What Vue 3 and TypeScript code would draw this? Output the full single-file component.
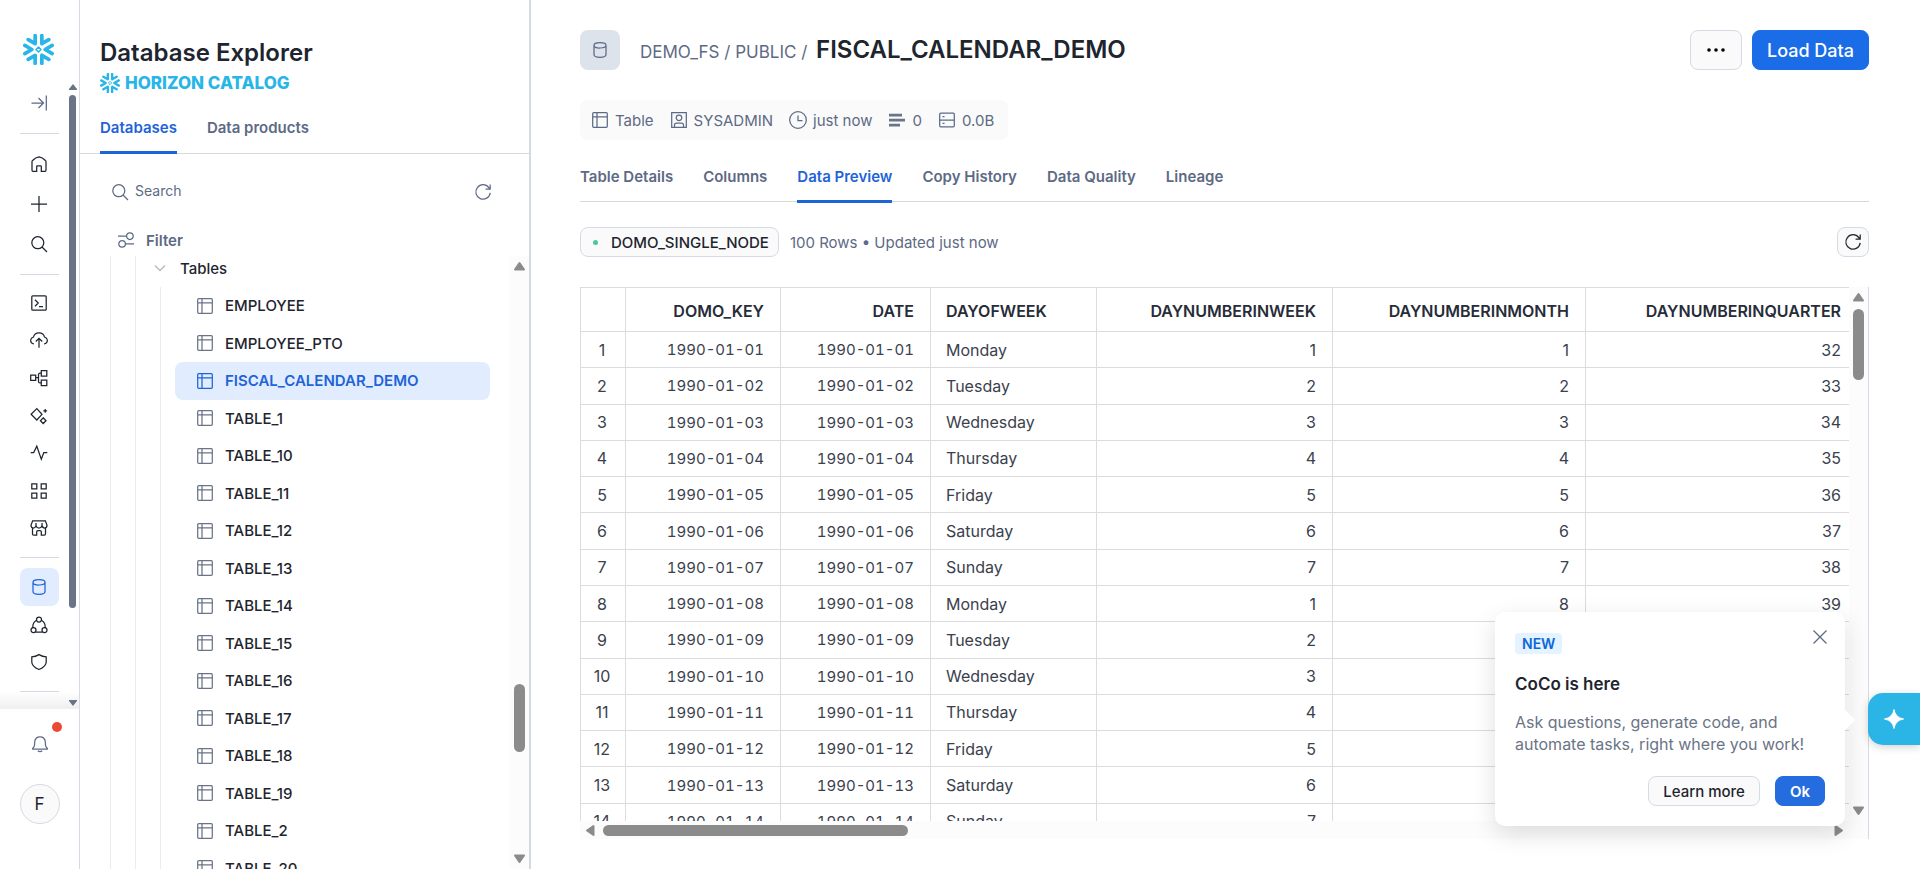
<script setup lang="ts">
import { h, ref } from 'vue'

const paths: Record<string, string> = {
  collapse: 'M.5 8H12M7.5 3l5 5-5 5M15.3.5v15',
  home: 'M5.7 15.3H2q-1 0-1-1V5.6q0-.7.6-1.1Q4.600 1.200 8 .8q3.400.400 6.400 3.700.600.400.600 1.100v8.700q0 1-1 1h-3.700V10.500q0-.7-.7-.7H6.400q-.7 0-.7.700z',
  plus: 'M0 8h16M8 0v16',
  search: 'M12.800 6.700A6 6 0 1 1 .8 6.700a6 6 0 0 1 12 0zM11 11l5 5',
  terminal: 'M1.800.800h12.400q1 0 1 1v12.400q0 1-1 1H1.800q-1 0-1-1V1.800q0-1 1-1zM4 4.800l3.200 3.200L4 11.200M8 11.700h4',
  cloud: 'M3 12C1 11.600-.500 10 -.3 8c.2-1.500 1.300-2.600 2.800-3C3 2.500 5.200.8 8 .8s5 1.700 5.500 4.200c1.500.4 2.600 1.500 2.800 3 .2 2-1.300 3.600-3.300 4M8 15.800V6.500M4.800 9.500 8 6.300l3.200 3.200',
  flow: 'M-.3 5h5v5.400h-5zM10.300.500h5.500V6h-5.500zM10.300 10.200h5.500v5.300h-5.500zM4.700 7.700h2.800M10.300 3.200H9q-1.500 0-1.500 1.500V11.400q0 1.500 1.500 1.500h1.300',
  sparkles: 'M5.800.600 11 6.300 5.800 12 .1 6.300zM12.200 9.800 15 12.700 12.200 15.500 9.400 12.700zM14.200.9v3.800M12.300 2.800h3.800',
  activity: 'M-.3 7.500h3L5.800 1.200 10.300 14.200 12.800 7.500h3.500',
  grid: 'M.8.800h5v5h-5zM10.200.800h5v5h-5zM.8 10.200h5v5h-5zM10.200 10.200h5v5h-5z',
  store: 'M1.600.800h12.800L16 5.300q0 2.700-2.200 2.700T11 5.500Q10.500 8 8 8T5 5.500Q4.500 8 2.300 8T0 5.300zM5 3v2.500M11 3v2.500M1.500 8v6q0 1.200 1.200 1.200h3V11.800q0-1.300 1.300-1.300h2q1.300 0 1.300 1.300v3.400h3q1.200 0 1.200-1.200V8',
  database: 'M2 3.300Q2 .7 8 .7t6 2.600-6 2.700-6-2.700zM2 3.300v9.200Q2 15.300 8 15.300t6-2.800V3.300',
  share: 'M10.500 2.500a2.500 2.500 0 1 1-5 0 2.500 2.500 0 0 1 5 0zM5 13a2.500 2.500 0 1 1-5 0 2.500 2.500 0 0 1 5 0zM16 13a2.500 2.500 0 1 1-5 0 2.500 2.500 0 0 1 5 0zM5.500 3.200Q1.500 5.500 1.800 10.500M10.500 3.200q4 2.300 3.700 7.300M4.800 15h6.400',
  shield: 'M8 .6q3.500 2.200 7.200 2.200V8q0 4.500-7.200 7.500Q.8 12.500.8 8V2.800Q4.500 2.800 8 .600z',
  bell: 'M.7 12.200q2-1 2-6Q3 .8 8 .8t5.300 5.400q0 5 2 6v1H.7zM5.800 14.700Q8 16.500 10.200 14.700',
  table: 'M1.700.700h12.600q1 0 1 1v12.600q0 1-1 1H1.700q-1 0-1-1V1.700q0-1 1-1zM.7 4.800h14.600M5 .700v14.600',
  chevron: 'M3 5.500 8 10.500 13 5.500',
  filter: 'M0 4.200h8M15.200 4.200a3.300 3.300 0 1 1-6.600 0 3.300 3.300 0 0 1 6.600 0zM7.400 11.800a3.300 3.300 0 1 1-6.600 0 3.300 3.300 0 0 1 6.600 0zM7.500 11.800H16',
  refresh: 'M15.200 8.800A7.200 7.200 0 1 1 13.800 3.600L15.200 5M15.200.6V5.200H10.600',
  person: 'M.7.7h14.600v14.600H.7zM10.800 5.800a2.800 2.800 0 1 1-5.600 0 2.800 2.800 0 0 1 5.600 0zM3.500 15v-2q0-2 2-2h5q2 0 2 2v2',
  clock: 'M16.300 8A8.300 8.300 0 1 1-.3 8a8.300 8.300 0 0 1 16.600 0zM8 3.500V8.500h4.500',
  server: 'M1.700 1.200h12.600q1 0 1 1v11.600q0 1-1 1H1.700q-1 0-1-1V2.200q0-1 1-1zM.7 8h14.600M3.500 4.600h2M3.500 11.400h2',
  close: 'M1.500 1.500l13 13M14.500 1.500l-13 13',
}

const Icon = (props: { name: string }) =>
  h(
    'svg',
    { width: 16, height: 16, viewBox: '0 0 16 16', fill: 'none', stroke: 'currentColor', 'stroke-width': 1.25, overflow: 'visible', 'aria-hidden': 'true' },
    [h('path', { d: paths[props.name] })],
  )
Icon.props = ['name']

const arrows: Record<string, string> = {
  up: 'M6.500 3 11 9.500H2z',
  down: 'M6.500 10 2 3.500h9z',
  left: 'M3 6.500 9.500 2v9z',
  right: 'M10 6.500 3.500 2v9z',
}
const Arrow = (props: { dir: string }) =>
  h(
    'svg',
    { width: 13, height: 13, viewBox: '0 0 13 13', fill: '#8b8b8b', stroke: '#8b8b8b', 'stroke-width': 2, 'stroke-linejoin': 'round', 'aria-hidden': 'true' },
    [h('path', { d: arrows[props.dir] })],
  )
Arrow.props = ['dir']

const Snowflake = (props: { size: number }) =>
  h('svg', { width: props.size, height: props.size, viewBox: '-15 -15 30 30', fill: 'none', stroke: '#29b5e8', 'aria-hidden': 'true' }, [
    ...[0, 60, 120, 180, 240, 300].map((angle) =>
      h('path', { d: 'M13.200-3.900 6.500 0l6.700 3.900', transform: `rotate(${angle})`, 'stroke-width': 3.6, 'stroke-linecap': 'round', 'stroke-linejoin': 'round' }),
    ),
    h('path', { d: 'M0-2.400 2.400 0 0 2.400-2.400 0z', 'stroke-width': 1.5, 'stroke-linejoin': 'round' }),
  ])
Snowflake.props = ['size']

const topNav = [['home', 'Home'], ['plus', 'Create'], ['search', 'Search']]
const midNav = [
  ['terminal', 'Projects'], ['cloud', 'Ingestion'], ['flow', 'Transformation'], ['sparkles', 'AI & ML'],
  ['activity', 'Monitoring'], ['grid', 'Apps'], ['store', 'Marketplace'],
]
const lowNav = [['database', 'Catalog'], ['share', 'Data sharing'], ['shield', 'Governance']]

const tables = [
  'EMPLOYEE', 'EMPLOYEE_PTO', 'FISCAL_CALENDAR_DEMO', 'TABLE_1', 'TABLE_10', 'TABLE_11', 'TABLE_12', 'TABLE_13',
  'TABLE_14', 'TABLE_15', 'TABLE_16', 'TABLE_17', 'TABLE_18', 'TABLE_19', 'TABLE_2', 'TABLE_20',
]
const selected = ref('FISCAL_CALENDAR_DEMO')

const tabs = ['Table Details', 'Columns', 'Data Preview', 'Copy History', 'Data Quality', 'Lineage']
const activeTab = ref('Data Preview')

const weekdays = ['Monday', 'Tuesday', 'Wednesday', 'Thursday', 'Friday', 'Saturday', 'Sunday']
const rows = Array.from({ length: 14 }, (_, i) => {
  const date = `1990-01-${String(i + 1).padStart(2, '0')}`
  return { n: i + 1, date, day: weekdays[i % 7], week: (i % 7) + 1, month: i + 1, quarter: 32 + i }
})

const query = ref('')
const showTip = ref(true)
</script>

<template>
  <div class="app">
    <nav class="rail" aria-label="Main">
      <a class="logo" href="#" aria-label="Home page"><Snowflake :size="31" /></a>
      <div class="rail-scroll">
        <div class="rail-items">
          <button class="rail-btn muted expand" aria-label="Expand menu"><Icon name="collapse" /></button>
          <hr />
          <div class="group top">
            <button v-for="[icon, label] in topNav" :key="icon" class="rail-btn" :aria-label="label"><Icon :name="icon" /></button>
          </div>
          <hr />
          <div class="group mid">
            <button v-for="[icon, label] in midNav" :key="icon" class="rail-btn" :aria-label="label"><Icon :name="icon" /></button>
          </div>
          <hr />
          <div class="group low">
            <button v-for="[icon, label] in lowNav" :key="icon" class="rail-btn" :class="{ active: icon === 'database' }" :aria-label="label">
              <Icon :name="icon" />
            </button>
          </div>
          <hr />
        </div>
        <div class="rail-bar">
          <svg width="8" height="6" viewBox="0 0 8 6"><path d="M4 0 8 5v1H0V5z" /></svg>
          <div class="rail-thumb"></div>
          <svg width="8" height="6" viewBox="0 0 8 6"><path d="M4 6 8 1V0H0v1z" /></svg>
        </div>
      </div>
      <div class="rail-foot">
        <button class="bell" aria-label="Notifications"><Icon name="bell" /><span class="dot"></span></button>
        <button class="avatar" aria-label="Account">F</button>
      </div>
    </nav>

    <aside class="explorer">
      <header class="ex-head">
        <h1>Database Explorer</h1>
        <div class="brand"><Snowflake :size="20" /><span>HORIZON CATALOG</span></div>
        <div class="tabs ex-tabs" role="tablist">
          <button role="tab" class="tab on">Databases</button>
          <button role="tab" class="tab">Data products</button>
        </div>
      </header>
      <div class="search">
        <label for="search" aria-label="Search"><Icon name="search" /></label>
        <input id="search" v-model="query" type="text" placeholder="Search" />
        <button class="plain" aria-label="Refresh list"><Icon name="refresh" /></button>
      </div>
      <button class="filter"><Icon name="filter" />Filter</button>
      <div class="tree-area">
        <div class="tree">
          <div class="guide">
            <div class="guide nested">
              <button class="folder"><Icon name="chevron" />Tables</button>
              <ul class="guide nested inner">
                <li v-for="name in tables" :key="name">
                  <button class="leaf" :class="{ sel: name === selected }" @click="selected = name"><Icon name="table" />{{ name }}</button>
                </li>
              </ul>
            </div>
          </div>
        </div>
        <div class="vbar">
          <Arrow dir="up" />
          <div class="track"><div class="thumb tree-thumb"></div></div>
          <Arrow dir="down" />
        </div>
      </div>
    </aside>

    <main class="main">
      <header class="title-row">
        <span class="db-icon"><Icon name="database" /></span>
        <div class="crumbs">
          <a href="#">DEMO_FS</a> / <a href="#">PUBLIC</a> / <h2>FISCAL_CALENDAR_DEMO</h2>
        </div>
        <button class="btn more" aria-label="More actions">
          <svg width="18" height="4" viewBox="0 0 18 4"><circle cx="2" cy="2" r="1.800" /><circle cx="9" cy="2" r="1.800" /><circle cx="16" cy="2" r="1.800" /></svg>
        </button>
        <button class="btn load">Load Data</button>
      </header>

      <div class="meta">
        <span><Icon name="table" />Table</span>
        <span><Icon name="person" />SYSADMIN</span>
        <span><Icon name="clock" />just now</span>
        <span>
          <svg width="16" height="16" viewBox="0 0 16 16" fill="#6a7486"><path d="M0 1.800h13v2.600H0zM0 6.800h16v2.600H0zM0 11.800h11v2.600H0z" /></svg>0
        </span>
        <span><Icon name="server" />0.0B</span>
      </div>

      <div class="tabs main-tabs" role="tablist">
        <button v-for="t in tabs" :key="t" role="tab" class="tab" :class="{ on: t === activeTab }" @click="activeTab = t">{{ t }}</button>
      </div>

      <div class="status">
        <button class="btn warehouse"><span class="live"></span>DOMO_SINGLE_NODE</button>
        <span class="info">100 Rows • Updated just now</span>
        <button class="btn reload" aria-label="Refresh preview"><Icon name="refresh" /></button>
      </div>

      <section class="grid-box">
        <div class="grid-view">
          <table>
            <colgroup><col class="c0" /><col class="c1" /><col class="c2" /><col class="c3" /><col class="c4" /><col class="c5" /><col class="c6" /></colgroup>
            <thead>
              <tr>
                <th class="num"></th><th>DOMO_KEY</th><th>DATE</th><th class="left">DAYOFWEEK</th>
                <th>DAYNUMBERINWEEK</th><th>DAYNUMBERINMONTH</th><th>DAYNUMBERINQUARTER</th>
              </tr>
            </thead>
            <tbody>
              <tr v-for="r in rows" :key="r.n">
                <td class="num">{{ r.n }}</td><td class="date">{{ r.date }}</td><td class="date">{{ r.date }}</td><td class="left">{{ r.day }}</td>
                <td>{{ r.week }}</td><td>{{ r.month }}</td><td>{{ r.quarter }}</td>
              </tr>
            </tbody>
          </table>
        </div>
        <div class="vbar">
          <Arrow dir="up" />
          <div class="track"><div class="thumb grid-thumb"></div></div>
          <Arrow dir="down" />
        </div>
        <div class="hbar">
          <Arrow dir="left" />
          <div class="track"><div class="thumb wide-thumb"></div></div>
          <Arrow dir="right" />
        </div>
        <div class="corner"></div>
      </section>
    </main>

    <div v-if="showTip" class="tip" role="dialog" aria-labelledby="tip-title">
      <div class="tip-head">
        <span class="badge">NEW</span>
        <button class="plain close" aria-label="Close" @click="showTip = false"><Icon name="close" /></button>
      </div>
      <h3 id="tip-title">CoCo is here</h3>
      <p>Ask questions, generate code, and automate tasks, right where you work!</p>
      <div class="tip-actions">
        <button class="btn">Learn more</button>
        <button class="btn ok" @click="showTip = false">Ok</button>
      </div>
    </div>
    <button class="assistant" aria-label="Open CoCo">
      <svg width="20" height="20" viewBox="0 0 20 20" fill="#fff"><path d="M10 .5Q11.300 8.700 19.500 10 11.300 11.300 10 19.500 8.700 11.300.500 10 8.700 8.700 10 .5z" stroke="#fff" stroke-linejoin="round" /></svg>
    </button>
  </div>
</template>

<style>
body { margin: 0; background: #fff; overflow: hidden; }
</style>

<style scoped>
.app { display: flex; height: 100vh; min-height: 600px; position: relative; overflow: hidden; font-family: Inter, "Liberation Sans", sans-serif; font-size: 15px; color: #1e252f; }
.app *, .app *::before, .app *::after { box-sizing: border-box; }
button, input { font: inherit; color: inherit; background: none; border: 0; padding: 0; margin: 0; }
button { cursor: pointer; }
svg { flex: none; display: block; }
h1, h2, h3, p, ul { margin: 0; padding: 0; }
ul { list-style: none; }
a { color: inherit; text-decoration: none; }

.rail { width: 80px; flex: none; border-right: 1px solid #d5dae4; display: flex; flex-direction: column; }
.logo { padding: 34px 0 0 23px; height: 83px; }
.rail-scroll { height: 626px; display: flex; background: linear-gradient(to top, #efefef, #fff 18px); }
.rail-items { width: 69px; padding: 0 10px 0 20px; }
.rail-items hr { border: 0; border-top: 1px solid #d5dae4; margin: 0; }
.rail-btn { width: 39px; padding-right: 1px; display: flex; align-items: center; justify-content: center; border-radius: 8px; }
.expand { height: 40px; margin-bottom: 10px; }
.muted { color: #5d6a85; }
.group { display: flex; flex-direction: column; padding: 10px 0; }
.group .rail-btn { flex: 1; }
.group.top { height: 140px; }
.group.mid { height: 282px; padding-top: 9px; }
.group.low { height: 133px; }
.rail-btn.active { background: #e1edfe; color: #1f63d8; }
.rail-bar { display: flex; flex-direction: column; align-items: center; width: 7px; fill: #6a7486; padding: 1px 0 3px; }
.rail-thumb { flex: 0 0 513px; width: 7px; border-radius: 4px; background: #6a7486; margin: 5px 0 auto; }
.rail-foot { display: flex; flex-direction: column; align-items: center; padding-top: 15px; gap: 20px; }
.bell { width: 40px; height: 40px; display: flex; align-items: center; justify-content: center; position: relative; color: #5d6a85; }
.dot { position: absolute; right: -2px; top: -2px; width: 10px; height: 10px; border-radius: 50%; background: #ea4a35; }
.avatar { width: 40px; height: 40px; border-radius: 50%; border: 1px solid #d5dae4; background: #fafafa; font-size: 17px; }

.explorer { width: 451px; flex: none; border-right: 2px solid #d5dae0; display: flex; flex-direction: column; }
.ex-head { padding: 38px 20px 0; height: 154px; display: flex; flex-direction: column; border-bottom: 1px solid #d7dadd; }
h1 { font-size: 24px; line-height: 30px; font-weight: 600; }
.brand { display: flex; align-items: center; gap: 5px; height: 30px; color: #29b5e8; font-size: 17px; font-weight: 800; }
.tabs { display: flex; gap: 30px; }
.tab { color: #5d6a85; font-weight: 600; font-size: 15px; border-bottom: 3px solid transparent; }
.tab.on { color: #1f63d8; border-color: #1f63d8; }
.ex-tabs { margin-top: auto; height: 51px; margin-bottom: -1px; }
.search { display: flex; align-items: center; gap: 7px; height: 40px; margin: 18px 38px 0 32px; color: #5d6a85; }
.search input { flex: 1; min-width: 0; font-size: 14px; line-height: 18px; padding-bottom: 2px; outline: 0; }
.search input::placeholder { color: #5d6a85; opacity: 1; }
.plain { color: #5d6a85; }
.filter { display: flex; align-items: center; gap: 12px; height: 28px; margin: 14px 0 2px 38px; color: #5d6a85; font-weight: 600; }
.tree-area { flex: 1; min-height: 0; display: flex; }
.tree { flex: 1; min-width: 0; overflow: hidden; padding-left: 30px; }
.guide { border-left: 1px solid #ebebeb; }
.nested { margin-left: 24px; }
.folder { display: flex; align-items: center; gap: 12px; height: 31px; padding: 0 0 7px 16px; font-weight: 500; }
.folder svg { color: #b0b8c8; }
.inner { display: grid; grid-auto-rows: 1fr; height: 600px; margin-right: 20px; padding-left: 14px; }
.leaf { display: flex; align-items: center; gap: 12px; width: 100%; height: 100%; padding-left: 22px; border-radius: 8px; font-weight: 500; }
.leaf svg { color: #6a7486; }
.leaf.sel { background: #e1edfe; color: #1f63d8; font-weight: 600; }
.leaf.sel svg { color: #1f63d8; }

.vbar, .hbar { background: #fcfcfc; display: flex; align-items: center; }
.vbar { width: 19px; flex-direction: column; padding: 4px 0; gap: 5px; }
.hbar { height: 18px; padding: 0 4px; gap: 6px; }
.track { flex: 1; min-width: 0; min-height: 0; }
.thumb { background: #8b8b8b; border-radius: 6px; }
.tree-thumb { width: 11px; height: 68px; margin-top: 406px; }
.grid-thumb { width: 11px; height: 71px; }
.wide-thumb { height: 11px; width: 305px; }

.main { flex: 1; min-width: 0; padding: 30px 51px 30px 49px; display: flex; flex-direction: column; }
.title-row { display: flex; align-items: center; height: 40px; gap: 10px; }
.db-icon { width: 40px; height: 40px; border-radius: 8px; background: #dde3ea; color: #5d6a85; display: flex; align-items: center; justify-content: center; }
.crumbs { flex: 1; margin-left: 10px; padding-top: 1px; font-size: 17px; line-height: 30px; color: #5d6a85; white-space: nowrap; }
h2 { display: inline; padding-left: 4px; font-size: 24px; font-weight: 600; color: #1e252f; }
.btn { border: 1px solid #d5dae4; background: #fafafa; border-radius: 8px; font-size: 15px; font-weight: 500; height: 30px; display: flex; align-items: center; justify-content: center; white-space: nowrap; }
.more { width: 52px; height: 40px; }
.load { height: 40px; padding: 0 14px; background: #1a6ce7; border-color: #1a6ce7; color: #fff; font-size: 18px; }
.meta { align-self: flex-start; display: flex; align-items: center; gap: 17px; height: 40px; margin-top: 30px; padding: 0 14px 0 12px; border-radius: 8px; background: #fafafa; color: #5d6a85; font-size: 15px; }
.meta span { display: flex; align-items: center; gap: 7px; }
.main-tabs { height: 52px; margin-top: 10px; border-bottom: 1px solid #d7dadd; }
.main-tabs .tab { height: 53px; padding-top: 2px; }
.status { display: flex; align-items: center; gap: 11px; margin-top: 25px; height: 30px; }
.warehouse { padding: 0 9px 0 12px; gap: 13px; }
.live { width: 5px; height: 5px; border-radius: 50%; background: #4ac79b; }
.info { flex: 1; color: #5d6a85; }
.reload { width: 32px; }

.grid-box { flex: 1; min-height: 0; margin-top: 30px; display: grid; grid-template-columns: minmax(0, 1fr) 20px; grid-template-rows: minmax(0, 1fr) 18px; }
.grid-box .vbar { width: 20px; border-right: 1px solid #d5dae4; }
.corner { background: #fcfcfc; border-right: 1px solid #d5dae4; }
.grid-view { overflow: hidden; }
table { width: 1277px; min-width: 100%; height: 553px; border-collapse: collapse; table-layout: fixed; font-size: 16px; color: #3a414d; }
.c0 { width: 45px; } .c1 { width: 155px; } .c2 { width: 150px; } .c3 { width: 166px; } .c4 { width: 236px; } .c5 { width: 253px; } .c6 { width: 272px; }
th, td { border: 1px solid #dcdcde; padding: 0 16px; text-align: right; }
thead tr { height: 44px; }
th { font-weight: 600; color: #262c38; padding-top: 2px; }
th.left, td.left { text-align: left; padding-left: 15px; }
td.num { text-align: center; padding: 0 2px 0 0; }
td.date { font-size: 15px; font-variant-numeric: tabular-nums; }

.tip { position: absolute; right: 75px; bottom: 43px; width: 350px; padding: 21px 20px 20px; background: #fff; border-radius: 10px; box-shadow: 0 8px 24px rgba(0, 0, 0, .13); }
.tip::after { content: ""; position: absolute; left: 100%; top: 98px; border: 10px solid transparent; border-left-color: #fff; border-right: 0; }
.tip-head { display: flex; justify-content: space-between; align-items: flex-start; }
.close { margin: -4px -3px 0 0; }
.badge { height: 21px; line-height: 21px; padding: 0 7px; border-radius: 4px; background: #e5f2ff; color: #0a68da; font-size: 14px; font-weight: 600; }
h3 { font-size: 17px; line-height: 24px; font-weight: 600; margin-top: 18px; }
.tip p { margin-top: 15px; font-size: 16px; line-height: 22px; color: #6a7486; }
.tip-actions { display: flex; justify-content: flex-end; gap: 15px; margin-top: 21px; }
.tip-actions .btn { padding: 0 14px; }
.tip-actions .ok { background: #256ddf; border-color: #256ddf; color: #fff; font-weight: 600; }
.assistant { position: absolute; right: 0; bottom: 124px; width: 52px; height: 52px; border-radius: 15px 0 0 15px; background: #2bb4e6; display: flex; align-items: center; justify-content: center; box-shadow: 0 2px 8px rgba(0, 0, 0, .18); }
</style>
